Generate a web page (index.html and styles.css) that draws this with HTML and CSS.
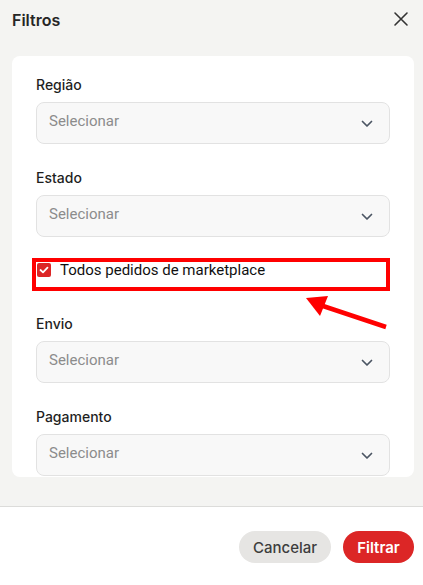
FILE: index.html
```html
<!DOCTYPE html>
<html lang="pt-BR">
<head>
  <meta charset="UTF-8" />
  <meta name="viewport" content="width=device-width, initial-scale=1.0" />
  <title>Filtros</title>
  <link rel="stylesheet" href="styles.css">
</head>
<body>
  <div class="modal">
    <div class="modal-header">
      <h2>Filtros</h2>
      <svg class="close" width="16" height="16" viewBox="0 0 16 16">
        <path d="M2 2 L14 14 M14 2 L2 14" stroke="#333" stroke-width="1.6" fill="none" stroke-linecap="round" />
      </svg>
    </div>

    <div class="modal-body">
      <div class="card">
        <label class="field-label">Região</label>
        <div class="select">
          <span>Selecionar</span>
          <svg width="12" height="8" viewBox="0 0 12 8"><path d="M1.5 1.5 L6 6 L10.5 1.5" stroke="#4b5563" stroke-width="1.7" fill="none" stroke-linecap="round" stroke-linejoin="round" /></svg>
        </div>

        <label class="field-label">Estado</label>
        <div class="select">
          <span>Selecionar</span>
          <svg width="12" height="8" viewBox="0 0 12 8"><path d="M1.5 1.5 L6 6 L10.5 1.5" stroke="#4b5563" stroke-width="1.7" fill="none" stroke-linecap="round" stroke-linejoin="round" /></svg>
        </div>

        <div class="check-row">
          <span class="checkbox">
            <svg width="10" height="8" viewBox="0 0 10 8"><path d="M1.5 4 L4 6.3 L8.5 1.7" stroke="#fff" stroke-width="1.8" fill="none" stroke-linecap="round" stroke-linejoin="round" /></svg>
          </span>
          <span class="check-text">Todos pedidos de marketplace</span>
          <div class="highlight"></div>
        </div>

        <label class="field-label">Envio</label>
        <div class="select">
          <span>Selecionar</span>
          <svg width="12" height="8" viewBox="0 0 12 8"><path d="M1.5 1.5 L6 6 L10.5 1.5" stroke="#4b5563" stroke-width="1.7" fill="none" stroke-linecap="round" stroke-linejoin="round" /></svg>
        </div>

        <label class="field-label">Pagamento</label>
        <div class="select">
          <span>Selecionar</span>
          <svg width="12" height="8" viewBox="0 0 12 8"><path d="M1.5 1.5 L6 6 L10.5 1.5" stroke="#4b5563" stroke-width="1.7" fill="none" stroke-linecap="round" stroke-linejoin="round" /></svg>
        </div>
      </div>
    </div>

    <div class="modal-footer">
      <button class="btn btn-cancel">Cancelar</button>
      <button class="btn btn-primary">Filtrar</button>
    </div>

    <svg class="arrow" width="100" height="40" viewBox="0 0 100 40">
      <path d="M88 35 L22 13" stroke="#ff0000" stroke-width="4.5" fill="none" />
      <path d="M8 6 L30 4 L22 24 Z" fill="#ff0000" />
    </svg>
  </div>
</body>
</html>
```

FILE: styles.css
```css
* {
  box-sizing: border-box;
}
body {
  margin: 0;
  font-family: Inter, 'Noto Sans', sans-serif;
  color: #1f1f1f;
  background-color: #ffffff;
}
.modal {
  position: relative;
  width: 423px;
  height: 585px;
  display: flex;
  flex-direction: column;
  background-color: #f4f4f2;
  overflow: hidden;
}
.modal-header {
  height: 56px;
  display: flex;
  justify-content: space-between;
  align-items: flex-start;
  padding: 10px 12px 0 12px;
}
.modal-header h2 {
  margin: 0;
  font-size: 16px;
  font-weight: 600;
  line-height: 20px;
  color: #262626;
}
.close {
  margin-top: 1px;
  margin-right: 2px;
}
.modal-body {
  height: 451px;
  padding: 0 9px 0 12px;
  border-bottom: 1px solid #dcdcda;
}
.card {
  height: 421px;
  background-color: #ffffff;
  border-radius: 8px;
  padding: 19px 24px 0 24px;
  overflow: hidden;
}
.field-label {
  display: block;
  font-size: 14px;
  font-weight: 500;
  line-height: 20px;
  color: #1f1f1f;
  margin-bottom: 7px;
}
.select {
  height: 42px;
  display: flex;
  align-items: center;
  justify-content: space-between;
  padding: 0 16px 4px 12px;
  background-color: #f8f8f8;
  border: 1px solid #e2e2e2;
  border-radius: 8px;
  margin-bottom: 24px;
  color: #8c8c8c;
  font-family: Roboto, 'Noto Sans', sans-serif;
  font-size: 15px;
}
.select svg {
  margin-top: 6px;
}
.check-row {
  position: relative;
  display: flex;
  align-items: center;
  gap: 9px;
  height: 20px;
  margin-top: -1px;
  margin-bottom: 34px;
  padding-left: 1px;
}
.checkbox {
  width: 14px;
  height: 14px;
  border-radius: 2px;
  background-color: #dc2626;
  display: flex;
  align-items: center;
  justify-content: center;
}
.check-text {
  font-family: Roboto, 'Noto Sans', sans-serif;
  font-size: 15px;
  font-weight: 400;
  color: #111111;
}
.highlight {
  position: absolute;
  left: -4px;
  top: -2px;
  width: 358px;
  height: 33px;
  border: 4px solid #ff0000;
}
.modal-footer {
  flex: 1;
  background-color: #ffffff;
  display: flex;
  justify-content: flex-end;
  gap: 12px;
  padding: 24px 9px 0 0;
}
.btn {
  height: 32px;
  border: none;
  border-radius: 16px;
  font-family: Inter, 'Noto Sans', sans-serif;
  font-size: 15px;
  cursor: pointer;
}
.btn-cancel {
  width: 92px;
  background-color: #e6e5e3;
  color: #3d3d3d;
  font-weight: 500;
}
.btn-primary {
  width: 71px;
  background-color: #dc2626;
  color: #ffffff;
  font-weight: 600;
}
.arrow {
  position: absolute;
  left: 298px;
  top: 292px;
}
```
